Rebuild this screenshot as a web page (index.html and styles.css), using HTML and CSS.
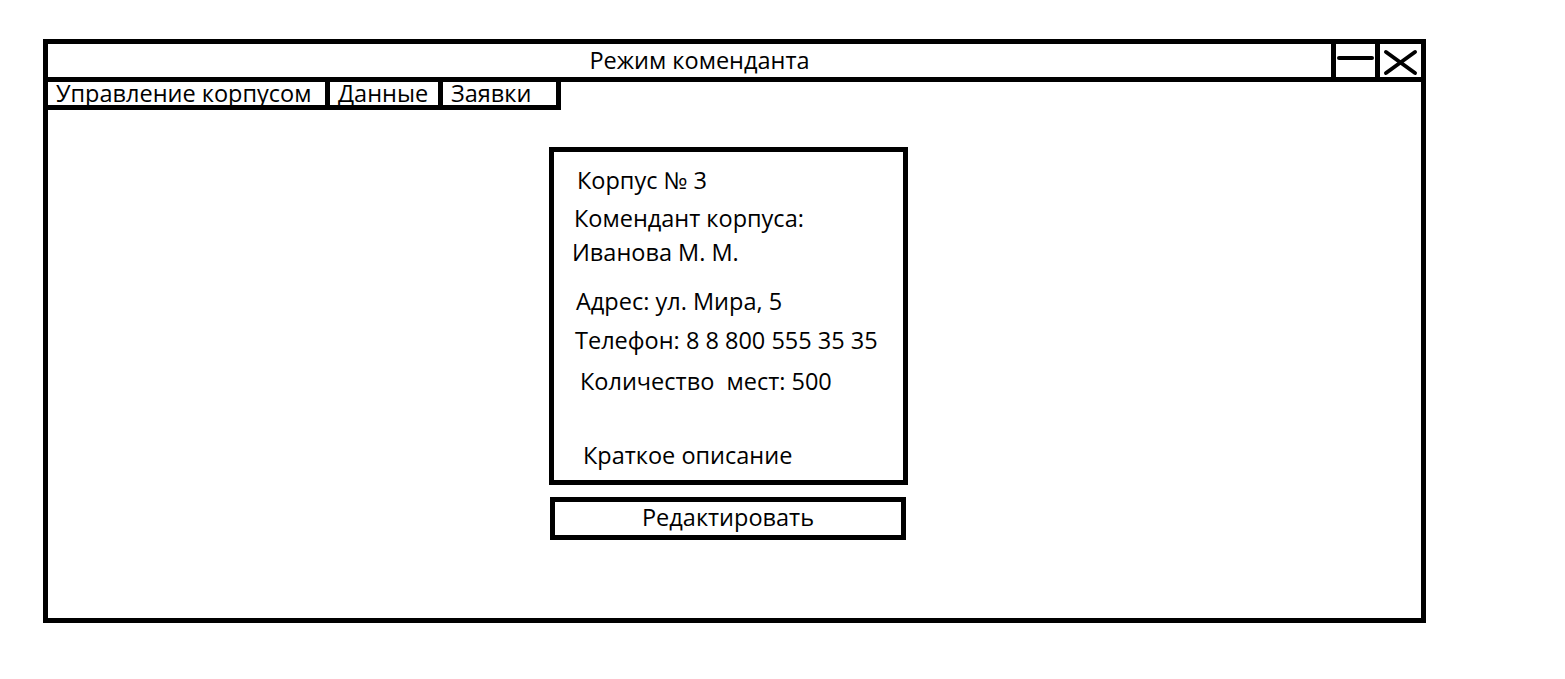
FILE: index.html
```html
<!DOCTYPE html>
<html lang="ru">
<head>
  <meta charset="UTF-8">
  <title>Режим коменданта</title>
  <link rel="stylesheet" href="styles.css">
</head>
<body>

  <div class="window">
    <div class="titlebar">
      <div class="title">Режим коменданта</div>
      <div class="win-btn">
        <svg width="39" height="33" viewBox="0 0 39 33">
          <line x1="3" y1="14" x2="36" y2="14" stroke="#000" stroke-width="4" stroke-linecap="round"/>
        </svg>
      </div>
      <div class="win-btn close">
        <svg width="41" height="33" viewBox="0 0 41 33">
          <line x1="6" y1="8" x2="35" y2="29" stroke="#000" stroke-width="4" stroke-linecap="round"/>
          <line x1="6" y1="29" x2="35" y2="8" stroke="#000" stroke-width="4" stroke-linecap="round"/>
        </svg>
      </div>
    </div>

    <ul class="menu">
      <li class="tab tab-building">Управление корпусом</li>
      <li class="tab tab-data">Данные</li>
      <li class="tab tab-requests">Заявки</li>
    </ul>

    <div class="content">
      <div class="card">
        <div class="line l1">Корпус № 3</div>
        <div class="line l2">Комендант корпуса:</div>
        <div class="line l3">Иванова М. М.</div>
        <div class="line l4">Адрес: ул. Мира, 5</div>
        <div class="line l5">Телефон: 8 8 800 555 35 35</div>
        <div class="line l6">Количество&nbsp; мест: 500</div>
        <div class="line l7">Краткое описание</div>
      </div>
      <div class="edit-btn">Редактировать</div>
    </div>
  </div>

</body>
</html>
```

FILE: styles.css
```css
* {
  box-sizing: border-box;
}

body {
  margin: 0;
  background-color: white;
  color: black;
  font-family: "Open Sans", "Liberation Sans", sans-serif;
  font-size: 23.5px;
}

.window {
  margin: 39px 0 0 43px;
  width: 1383px;
  height: 584px;
  border: 5px solid black;
}

/* title bar */

.titlebar {
  display: flex;
  height: 38px;
  border-bottom: 5px solid black;
}

.title {
  flex: 1;
  padding-left: 20px;
  text-align: center;
  line-height: 33px;
}

.win-btn {
  width: 44px;
  border-left: 5px solid black;
  display: flex;
}

.win-btn.close {
  width: 46px;
}

/* tabs */

.menu {
  list-style: none;
  margin: 0;
  padding: 0;
  display: flex;
}

.tab {
  height: 28px;
  line-height: 23px;
  border-right: 5px solid black;
  border-bottom: 5px solid black;
  padding-left: 8px;
  white-space: nowrap;
}

.tab-building {
  width: 282px;
}

.tab-data {
  width: 113px;
}

.tab-requests {
  width: 118px;
}

/* card */

.content {
  padding: 37px 0 0 501px;
}

.card {
  width: 359px;
  height: 338px;
  border: 5px solid black;
  padding-top: 13px;
}

.line {
  line-height: 30px;
  white-space: nowrap;
}

.l1 { padding-left: 23px; }
.l2 { padding-left: 20px; margin-top: 8px; }
.l3 { padding-left: 18px; margin-top: 4px; }
.l4 { padding-left: 22px; margin-top: 19px; }
.l5 { padding-left: 21px; margin-top: 9px; }
.l6 { padding-left: 26px; margin-top: 11px; }
.l7 { padding-left: 29px; margin-top: 44px; }

.edit-btn {
  margin: 12px 0 0 1px;
  width: 356px;
  height: 43px;
  border: 5px solid black;
  text-align: center;
  line-height: 31px;
}
```
